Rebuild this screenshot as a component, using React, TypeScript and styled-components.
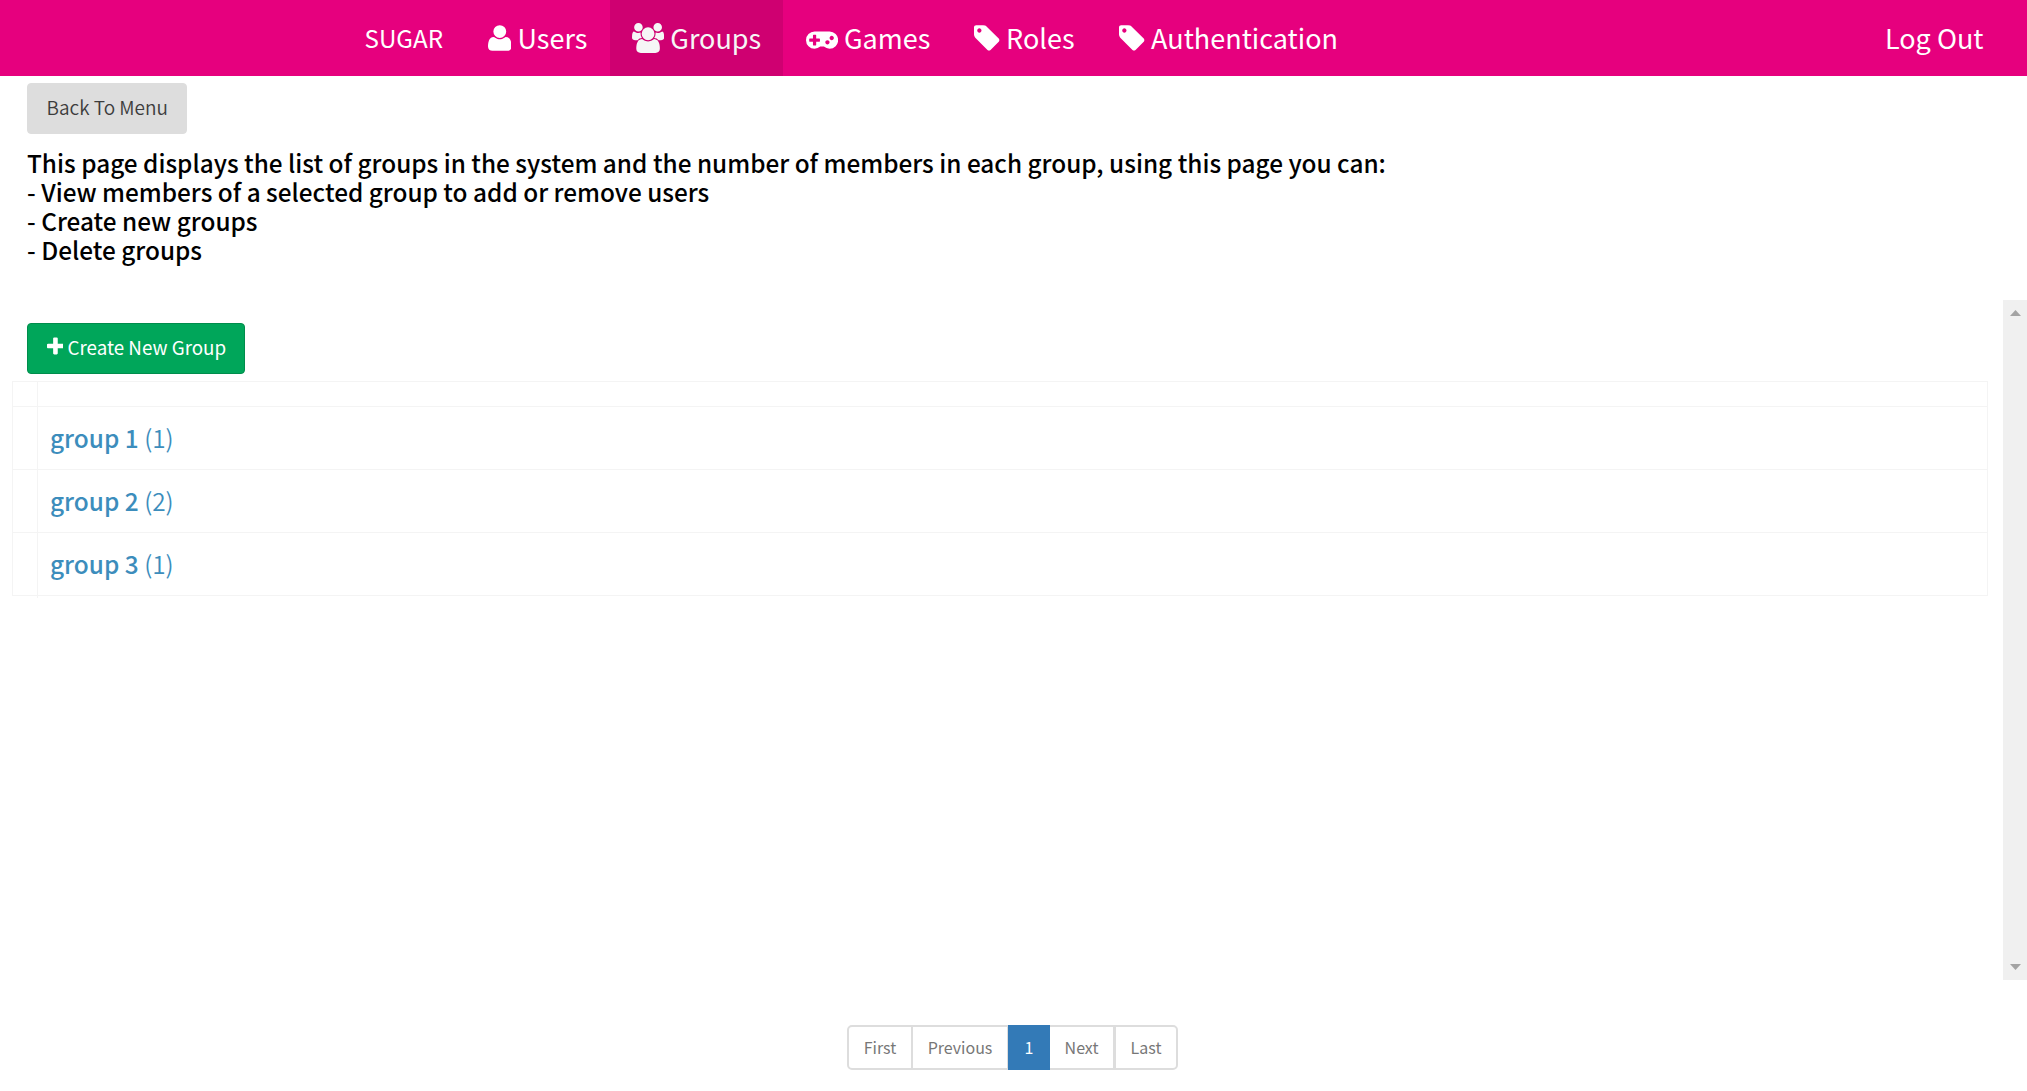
import React from "react";
import styled, { createGlobalStyle } from "styled-components";

const GlobalStyle = createGlobalStyle`
  * { box-sizing: border-box; }
  body {
    margin: 0;
    background: #fff;
    color: #000;
    font-family: "Noto Sans CJK JP", "Noto Sans", sans-serif;
    overflow: hidden;
  }
`;

const ICONS = {
  user: { width: 1408, d: "M1408 131q0 -120 -73 -189.5t-194 -69.5h-874q-121 0 -194 69.5t-73 189.5q0 53 3.5 103.5t14 109t26.5 108.5t43 97.5t62 81t85.5 53.5t111.5 20q9 0 42 -21.5t74.5 -48t108 -48t133.5 -21.5t133.5 21.5t108 48t74.5 48t42 21.5q61 0 111.5 -20t85.5 -53.5t62 -81t43 -97.5t26.5 -108.5t14 -109t3.5 -103.5zM1088 1024q0 -159 -112.5 -271.5t-271.5 -112.5t-271.5 112.5t-112.5 271.5t112.5 271.5t271.5 112.5t271.5 -112.5t112.5 -271.5z" },
  users: { width: 1920, d: "M593 640q-162 -5 -265 -128h-134q-82 0 -138 40.5t-56 118.5q0 353 124 353q6 0 43.5 -21t97.5 -42.5t119 -21.5q67 0 133 23q-5 -37 -5 -66q0 -139 81 -256zM1664 3q0 -120 -73 -189.5t-194 -69.5h-874q-121 0 -194 69.5t-73 189.5q0 53 3.5 103.5t14 109t26.5 108.5t43 97.5t62 81t85.5 53.5t111.5 20q10 0 43 -21.5t73 -48t107 -48t135 -21.5t135 21.5t107 48t73 48t43 21.5q61 0 111.5 -20t85.5 -53.5t62 -81t43 -97.5t26.5 -108.5t14 -109t3.5 -103.5zM640 1280q0 -106 -75 -181t-181 -75t-181 75t-75 181t75 181t181 75t181 -75t75 -181zM1344 896q0 -159 -112.5 -271.5t-271.5 -112.5t-271.5 112.5t-112.5 271.5t112.5 271.5t271.5 112.5t271.5 -112.5t112.5 -271.5zM1920 671q0 -78 -56 -118.5t-138 -40.5h-134q-103 123 -265 128q81 117 81 256q0 29 -5 66q66 -23 133 -23q59 0 119 21.5t97.5 42.5t43.5 21q124 0 124 -353zM1792 1280q0 -106 -75 -181t-181 -75t-181 75t-75 181t75 181t181 75t181 -75t75 -181z" },
  gamepad: { width: 1920, d: "M832 448v128q0 14 -9 23t-23 9h-192v192q0 14 -9 23t-23 9h-128q-14 0 -23 -9t-9 -23v-192h-192q-14 0 -23 -9t-9 -23v-128q0 -14 9 -23t23 -9h192v-192q0 -14 9 -23t23 -9h128q14 0 23 9t9 23v192h192q14 0 23 9t9 23zM1408 384q0 53 -37.5 90.5t-90.5 37.5t-90.5 -37.5t-37.5 -90.5t37.5 -90.5t90.5 -37.5t90.5 37.5t37.5 90.5zM1664 640q0 53 -37.5 90.5t-90.5 37.5t-90.5 -37.5t-37.5 -90.5t37.5 -90.5t90.5 -37.5t90.5 37.5t37.5 90.5zM1920 512q0 -212 -150 -362t-362 -150q-192 0 -338 128h-220q-146 -128 -338 -128q-212 0 -362 150t-150 362t150 362t362 150h896q212 0 362 -150t150 -362z" },
  tag: { width: 1536, d: "M448 1088q0 53 -37.5 90.5t-90.5 37.5t-90.5 -37.5t-37.5 -90.5t37.5 -90.5t90.5 -37.5t90.5 37.5t37.5 90.5zM1515 512q0 -53 -37 -90l-491 -492q-39 -37 -91 -37q-53 0 -90 37l-715 716q-38 37 -64.5 101t-26.5 117v416q0 52 38 90t90 38h416q53 0 117 -26.5t102 -64.5l715 -714q37 -39 37 -91z" },
  plus: { width: 1408, d: "M1408 800v-192q0 -40 -28 -68t-68 -28h-416v-416q0 -40 -28 -68t-68 -28h-192q-40 0 -68 28t-28 68v416h-416q-40 0 -68 28t-28 68v192q0 40 28 68t68 28h416v416q0 40 28 68t68 28h192q40 0 68 -28t28 -68v-416h416q40 0 68 -28t28 -68z" },
};

type IconName = keyof typeof ICONS;

const Glyph = styled.svg`
  display: block;
  flex: none;
  fill: currentColor;
`;

function Icon({ name, size }: { name: IconName; size: number }) {
  const { width, d } = ICONS[name];
  return (
    <Glyph width={(width / 1792) * size} height={size} viewBox={`0 0 ${width} 1792`}>
      <path d={d} fillRule="evenodd" transform="translate(0 1536) scale(1 -1)" />
    </Glyph>
  );
}

const Page = styled.div`
  display: flex;
  flex-direction: column;
  height: 1091px;
  width: 2027px;
`;

const Header = styled.header`
  display: flex;
  height: 76px;
  flex: none;
  background: #e6007e;
  color: #fff;
  padding: 0 22px 0 342px;
`;

const Brand = styled.a`
  width: 123px;
  padding-left: 22.5px;
  font-size: 24.2px;
  line-height: 76px;
`;

const NavItem = styled.a<{ $width: number; $active?: boolean }>`
  display: flex;
  align-items: center;
  gap: 6.2px;
  width: ${(p) => p.$width}px;
  height: 76px;
  padding: 0 0 0 ${(p) => (p.$active ? 22 : 22.7)}px;
  font-size: 27px;
  line-height: 74px;
  white-space: nowrap;
  background: ${(p) => (p.$active ? "#cf0071" : "transparent")};
  color: ${(p) => (p.$active ? "#f6f6f6" : "#fff")};
`;

const LogOut = styled.a`
  margin-left: auto;
  padding-right: 21.5px;
  font-size: 27px;
  line-height: 76px;
`;

const Intro = styled.section`
  height: 224px;
  flex: none;
  padding: 7px 27px 0;
`;

const Button = styled.button<{ $primary?: boolean }>`
  display: flex;
  align-items: center;
  gap: 4px;
  width: ${(p) => (p.$primary ? 218 : 160)}px;
  height: 51px;
  padding: 0 0 3px 18.6px;
  border: 1.5px solid ${(p) => (p.$primary ? "#008d4c" : "#ddd")};
  border-radius: 4px;
  background: ${(p) => (p.$primary ? "#00a65a" : "#ddd")};
  color: ${(p) => (p.$primary ? "#fff" : "#3c3c3c")};
  font-family: inherit;
  font-size: ${(p) => (p.$primary ? 18.8 : 19)}px;
  font-weight: ${(p) => (p.$primary ? 400 : 350)};
  line-height: 28px;
  white-space: nowrap;
`;

const Description = styled.h4`
  display: flex;
  flex-direction: column;
  margin: 14px 0 0;
  font-size: 24.35px;
  font-weight: 500;
  line-height: 29px;
`;

const Line = styled.span`
  height: 29px;
`;

const Scroller = styled.main`
  display: flex;
  height: 680px;
  flex: none;
`;

const Content = styled.div`
  flex: 1;
  padding: 23px 15px 0 12px;
`;

const Toolbar = styled.div`
  padding: 0 15px;
  margin-bottom: 7px;
`;

const Table = styled.div`
  border: 1px solid #f4f4f4;
  border-bottom: 0;
`;

const TableRow = styled.div<{ $height: number }>`
  display: grid;
  grid-template-columns: 24px 1fr;
  height: ${(p) => p.$height}px;
  border-bottom: 1px solid #f4f4f4;
`;

const Cell = styled.div`
  height: 100%;
  padding-left: 12px;
  line-height: 61px;
  & + & {
    border-left: 1px solid #f4f4f4;
  }
`;

const GroupLink = styled.a`
  color: #3c8dbc;
  font-size: 24.4px;
  font-weight: 350;
`;

const GroupName = styled.span`
  font-weight: 500;
`;

const Scrollbar = styled.div`
  display: flex;
  flex-direction: column;
  align-items: center;
  justify-content: space-between;
  width: 24px;
  padding: 10px 0 10px 1px;
  background: #f0f0f0;
`;

const Arrow = styled.svg`
  display: block;
  fill: #a3a3a3;
`;

const Footer = styled.footer`
  display: flex;
  padding: 45px 0 0 847px;
`;

const Pager = styled.div`
  display: flex;
  height: 45px;
`;

const PageLink = styled.a<{ $width: number; $left?: number; $right?: number; $end?: "first" | "last"; $active?: boolean }>`
  width: ${(p) => p.$width}px;
  border: 2px solid #ddd;
  border-left-width: ${(p) => p.$left ?? 0}px;
  border-right-width: ${(p) => p.$right ?? 0}px;
  border-color: ${(p) => (p.$active ? "#337ab7" : "#ddd")};
  border-radius: ${(p) => (p.$end === "first" ? "5px 0 0 5px" : p.$end === "last" ? "0 5px 5px 0" : "0")};
  background: ${(p) => (p.$active ? "#337ab7" : "#fff")};
  color: ${(p) => (p.$active ? "#fff" : "#777")};
  font-size: 16px;
  line-height: 41px;
  text-align: center;
`;

const groups = [
  { name: "group 1", members: 1 },
  { name: "group 2", members: 2 },
  { name: "group 3", members: 1 },
];

const description = [
  "This page displays the list of groups in the system and the number of members in each group, using this page you can:",
  "- View members of a selected group to add or remove users",
  "- Create new groups",
  "- Delete groups",
];

const nav: { label: string; icon: IconName; width: number; active?: boolean }[] = [
  { label: "Users", icon: "user", width: 145 },
  { label: "Groups", icon: "users", width: 173, active: true },
  { label: "Games", icon: "gamepad", width: 168.5 },
  { label: "Roles", icon: "tag", width: 145 },
  { label: "Authentication", icon: "tag", width: 262 },
];

export default function App() {
  return (
    <Page>
      <GlobalStyle />
      <Header>
        <Brand>SUGAR</Brand>
        {nav.map((item) => (
          <NavItem key={item.label} $width={item.width} $active={item.active}>
            <Icon name={item.icon} size={30} />
            {item.label}
          </NavItem>
        ))}
        <LogOut>Log Out</LogOut>
      </Header>
      <Intro>
        <Button>Back To Menu</Button>
        <Description>
          {description.map((line) => (
            <Line key={line}>{line}</Line>
          ))}
        </Description>
      </Intro>
      <Scroller>
        <Content>
          <Toolbar>
            <Button $primary>
              <Icon name="plus" size={21.5} />
              Create New Group
            </Button>
          </Toolbar>
          <Table>
            <TableRow $height={25}>
              <Cell />
              <Cell />
            </TableRow>
            {groups.map((group) => (
              <TableRow key={group.name} $height={63}>
                <Cell />
                <Cell>
                  <GroupLink>
                    <GroupName>{group.name}</GroupName> ({group.members})
                  </GroupLink>
                </Cell>
              </TableRow>
            ))}
          </Table>
        </Content>
        <Scrollbar>
          <Arrow width="11" height="6" viewBox="0 0 11 6">
            <path d="M5.5 0L11 6H0z" />
          </Arrow>
          <Arrow width="11" height="6" viewBox="0 0 11 6">
            <path d="M5.5 6L11 0H0z" />
          </Arrow>
        </Scrollbar>
      </Scroller>
      <Footer>
        <Pager>
          <PageLink $width={66} $left={2} $right={2} $end="first">First</PageLink>
          <PageLink $width={95} $right={1}>Previous</PageLink>
          <PageLink $width={42} $active>1</PageLink>
          <PageLink $width={65} $right={2}>Next</PageLink>
          <PageLink $width={63} $left={1} $right={2} $end="last">Last</PageLink>
        </Pager>
      </Footer>
    </Page>
  );
}
